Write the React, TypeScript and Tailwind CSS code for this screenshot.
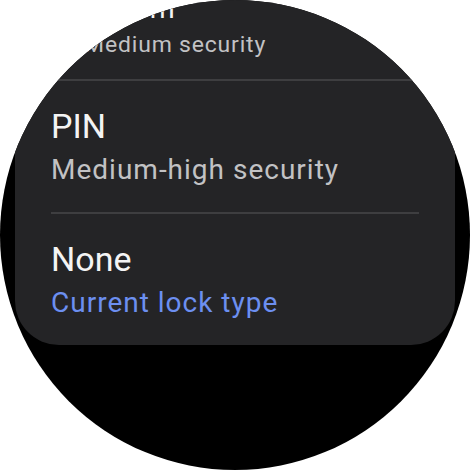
export default function App() {
  const font = { fontFamily: 'Roboto, "Noto Sans", sans-serif' };
  return (
    <div className="w-[470px] h-[470px] bg-white" style={font}>
      <div className="w-[470px] h-[470px] rounded-full bg-black overflow-hidden">
        <div className="mx-[15px] -mt-[52px] bg-[#242426] rounded-b-[44px]">
          <div className="px-[36px] pt-[25px] pb-[26px] h-[131px] origin-bottom scale-[0.82]">
            <div className="text-[34px] leading-[40px] text-[#f4f4f4]">Pattern</div>
            <div className="mt-[8px] text-[28px] leading-[32px] tracking-[1px] text-[#c2c2c4]">Medium security</div>
          </div>
          <div className="mx-[36px] h-[2px] bg-[#3e3e40]" />
          <div className="px-[36px] pt-[25px] pb-[26px]">
            <div className="text-[34px] leading-[40px] text-[#f4f4f4]">PIN</div>
            <div className="mt-[8px] text-[28px] leading-[32px] tracking-[1px] text-[#c2c2c4]">Medium-high security</div>
          </div>
          <div className="mx-[36px] h-[2px] bg-[#3e3e40]" />
          <div className="px-[36px] pt-[25px] pb-[26px]">
            <div className="text-[34px] leading-[40px] text-[#f4f4f4]">None</div>
            <div className="mt-[8px] text-[28px] leading-[32px] tracking-[1px] text-[#6c8ff0]">Current lock type</div>
          </div>
        </div>
      </div>
    </div>
  );
}
